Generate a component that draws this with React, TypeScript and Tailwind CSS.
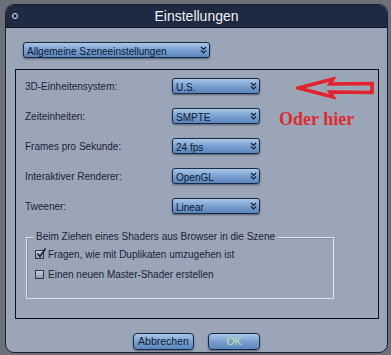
import React from "react";

const Chevron = () => (
  <svg width="7" height="8" viewBox="0 0 7 8" className="shrink-0">
    <path d="M1 1l2.5 2.5L6 1M1 4.5L3.5 7 6 4.5" fill="none" stroke="#16223a" strokeWidth="1.2" />
  </svg>
);

const Dropdown = ({ value, w = "w-[88px]" }: { value: string; w?: string }) => (
  <div
    className={`${w} h-[16px] flex items-end justify-between pl-[3px] pr-[2px] rounded-[3px] border border-[#1a2a45] bg-gradient-to-b from-[#a9c6e8] via-[#7aa0d0] to-[#5c86bd] shadow-[0_1px_2px_rgba(20,30,50,0.5)]`}
  >
    <span className="text-[10px] leading-none text-[#0e1a30]">{value}</span>
    <span className="self-center">
      <Chevron />
    </span>
  </div>
);

const Row = ({ label, value }: { label: string; value: string }) => (
  <div className="flex items-center h-[16px]">
    <span className="w-[147px] text-[10px] text-[#1b2435]">{label}</span>
    <Dropdown value={value} />
  </div>
);

const Checkbox = ({ checked, label }: { checked?: boolean; label: string }) => (
  <div className="flex items-center gap-[4px] h-[12px]">
    <div className="relative w-[9px] h-[9px] border border-[#2e3a50] bg-gradient-to-b from-[#c9d0dc] to-[#8e98aa]">
      {checked && (
        <svg width="11" height="11" viewBox="0 0 11 11" className="absolute -top-[3px] left-0">
          <path d="M1.5 5.5l2.5 3L9.5 0.5" fill="none" stroke="#14203a" strokeWidth="1.6" />
        </svg>
      )}
    </div>
    <span className="text-[10px] text-[#1b2435]">{label}</span>
  </div>
);

const Button = ({ children, w, text }: { children: React.ReactNode; w: string; text: string }) => (
  <div
    className={`${w} h-[17px] flex items-center justify-center rounded-[4px] border border-[#1a2a45] bg-gradient-to-b from-[#a9c6e8] via-[#7aa0d0] to-[#5c86bd] shadow-[0_1px_2px_rgba(20,30,50,0.5)] text-[10.5px] ${text}`}
  >
    {children}
  </div>
);

export default function App() {
  return (
    <div className="w-[391px] h-[355px] bg-[#6c7079] pt-[4px] pl-[5px] overflow-hidden" style={{ fontFamily: '"Liberation Sans", Arial, sans-serif' }}>
      <div className="relative w-[383px] h-[349px] rounded-[9px] border border-[#1a2030] bg-[#9aa5b8] flex flex-col overflow-hidden">
        {/* Title bar */}
        <div className="relative h-[23px] bg-[#1e2942] border-b border-[#0d1220] flex items-center justify-center shrink-0">
          <div className="absolute left-[6px] top-[8px] w-[6px] h-[6px] rounded-full border-[1.5px] border-[#e8ecf2]" />
          <span className="text-[14px] text-[#eef1f6]">Einstellungen</span>
        </div>

        {/* Body */}
        <div className="flex flex-col pl-[9px]">
          <div className="mt-[14px] ml-[8px]">
            <Dropdown value="Allgemeine Szeneeinstellungen" w="w-[187px]" />
          </div>

          <div className="mt-[11px] w-[364px] h-[250px] border-[1.5px] border-[#0b0f18] pl-[9px] pt-[8px] flex flex-col">
            <div className="flex flex-col gap-[14px]">
              <Row label="3D-Einheitensystem:" value="U.S." />
              <Row label="Zeiteinheiten:" value="SMPTE" />
              <Row label="Frames pro Sekunde:" value="24 fps" />
              <Row label="Interaktiver Renderer:" value="OpenGL" />
              <Row label="Tweener:" value="Linear" />
            </div>

            <div className="relative mt-[23px] ml-[1px] w-[308px] h-[62px] border border-[#dde2ea] shadow-[inset_1px_1px_0_rgba(90,100,120,0.35)] pl-[8px] pt-[10px] flex flex-col gap-[8px]">
              <span className="absolute -top-[7px] left-[6px] px-[3px] bg-[#9aa5b8] text-[10px] leading-[12px] text-[#1b2435]">
                Beim Ziehen eines Shaders aus Browser in die Szene
              </span>
              <Checkbox checked label="Fragen, wie mit Duplikaten umzugehen ist" />
              <Checkbox label="Einen neuen Master-Shader erstellen" />
            </div>
          </div>

          <div className="mt-[14px] flex gap-[14px] pl-[118px]">
            <Button w="w-[61px]" text="text-[#0e1a30]">Abbrechen</Button>
            <Button w="w-[52px]" text="text-[#c6e3a6]">OK</Button>
          </div>
        </div>

        {/* Annotation overlay */}
        <svg width="80" height="24" viewBox="0 0 80 24" className="absolute left-[290px] top-[72px]">
          <polygon
            points="2.5,11 37,2 34,7 76,6.5 76,15.5 34,15 37,20"
            fill="none"
            stroke="#e3232b"
            strokeWidth="3.6"
            strokeLinejoin="miter"
          />
        </svg>
        <span
          className="absolute left-[273px] top-[105px] text-[18px] leading-none font-bold text-[#df2a2f]"
          style={{ fontFamily: '"Liberation Serif", "Times New Roman", serif' }}
        >
          Oder hier
        </span>
      </div>
    </div>
  );
}
